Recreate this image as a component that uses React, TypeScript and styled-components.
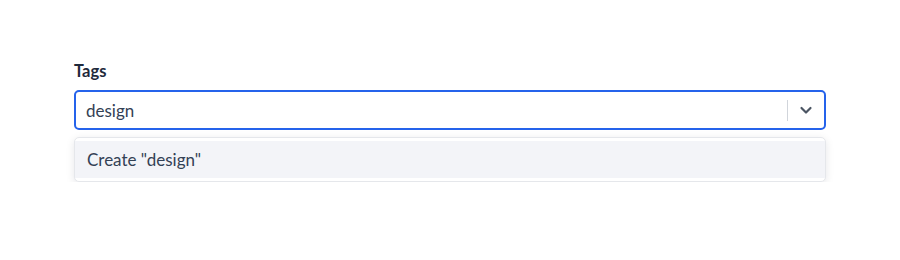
import React from 'react';
import styled, { createGlobalStyle } from 'styled-components';

const GlobalStyle = createGlobalStyle`
  html, body {
    margin: 0;
    padding: 0;
    background: #ffffff;
    font-family: Lato, "Open Sans", sans-serif;
  }
`

const Page = styled.div`
  padding: 61px 74px 0 74px;
  width: 900px;
  box-sizing: border-box;
`

const Field = styled.div`
  width: 752px;
  position: relative;
`

const Label = styled.label`
  display: block;
  font-size: 16.5px;
  font-weight: 700;
  color: #1e293b;
  line-height: 20px;
  margin-bottom: 9px;
`

const Control = styled.div`
  height: 40px;
  box-sizing: border-box;
  border: 2px solid #2563eb;
  border-radius: 5px;
  display: flex;
  align-items: center;
  padding-left: 10px;
  background: #fff;
`

const Input = styled.input`
  flex: 1;
  border: none;
  outline: none;
  font-family: inherit;
  font-size: 17px;
  color: #334155;
  padding: 0;
  background: transparent;
`

const Separator = styled.span`
  width: 1px;
  height: 21px;
  background: #d1d5db;
`

const Indicator = styled.div`
  width: 36px;
  display: flex;
  align-items: center;
  justify-content: center;
  color: #4b5563;
`

const Menu = styled.div`
  margin-top: 7px;
  border: 1px solid #e5e7eb;
  border-radius: 5px;
  box-shadow: 0 2px 8px rgba(15, 23, 42, 0.1);
  padding: 3px 0;
  background: #fff;
`

const Option = styled.div<{ $focused?: boolean }>`
  height: 37px;
  display: flex;
  align-items: center;
  padding: 0 12px;
  font-size: 17px;
  color: #334155;
  background: ${p => (p.$focused ? '#f3f4f8' : 'transparent')};
`

export default function App() {
  return (
    <>
      <GlobalStyle />
      <Page>
        <Field>
          <Label>Tags</Label>
          <Control>
            <Input defaultValue="design" />
            <Separator />
            <Indicator>
              <svg width="14" height="14" viewBox="0 0 14 14" fill="none" stroke="currentColor" strokeWidth="2.2" strokeLinecap="round" strokeLinejoin="round">
                <polyline points="2.5,5 7,9.5 11.5,5" />
              </svg>
            </Indicator>
          </Control>
          <Menu>
            <Option $focused>Create "design"</Option>
          </Menu>
        </Field>
      </Page>
    </>
  );
}
